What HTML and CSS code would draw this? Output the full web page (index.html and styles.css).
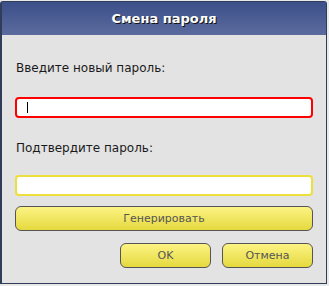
FILE: index.html
```html
<!DOCTYPE html>
<html>
<head>
    <meta charset="UTF-8">
    <title>Смена пароля</title>
    <link rel="stylesheet" href="styles.css">
</head>
<body>
<div class="dialog">
    <div class="titlebar">Смена пароля</div>
    <div class="content">
        <div class="label first">Введите новый пароль:</div>
        <div class="field error"><span class="caret"></span></div>

        <div class="label">Подтвердите пароль:</div>
        <div class="field warn"></div>

        <button class="btn wide">Генерировать</button>

        <div class="actions">
            <button class="btn">OK</button>
            <button class="btn">Отмена</button>
        </div>
    </div>
</div>
</body>
</html>
```

FILE: styles.css
```css
body {
    margin: 0;
    background-color: #e9e9e9;
    font-family: "DejaVu Sans", sans-serif;
}
.dialog {
    width: 327px;
    height: 283px;
    margin-top: 1px;
    box-sizing: border-box;
    border: 1px solid #2f3d58;
    border-left-width: 2px;
    border-radius: 3px 3px 0 0;
    background: #e3e3e3;
    display: flex;
    flex-direction: column;
}
.titlebar {
    height: 33px;
    line-height: 33px;
    text-align: center;
    font-size: 13px;
    font-weight: bold;
    color: white;
    text-shadow: 1px 1px 0 #111;
    background: linear-gradient(#3c4f89, #5b6b9e);
}
.content {
    padding: 0 13px;
    display: flex;
    flex-direction: column;
}
.label {
    font-size: 12px;
    line-height: 14px;
    color: #1a1a1a;
    margin: 23px 0 20px 1px;
}
.label.first {
    margin-top: 26px;
    margin-bottom: 22px;
}
.field {
    height: 21px;
    box-sizing: border-box;
    background: white;
    border-radius: 4px;
    display: flex;
    align-items: center;
    padding-left: 10px;
}
.field.error {
    border: 2px solid #ff0000;
}
.field.warn {
    border: 2px solid #ede03a;
}
.caret {
    width: 1px;
    height: 11px;
    background: #000;
}
.btn {
    height: 25px;
    box-sizing: border-box;
    border: 1px solid #555;
    border-radius: 6px;
    background: linear-gradient(#fcf384, #e5d93e);
    color: #555;
    font-family: "DejaVu Sans", sans-serif;
    font-size: 11px;
    padding: 0;
}
.btn.wide {
    margin-top: 10px;
}
.actions {
    margin-top: 12px;
    display: flex;
    justify-content: flex-end;
    gap: 11px;
}
.actions .btn {
    width: 91px;
}
```
